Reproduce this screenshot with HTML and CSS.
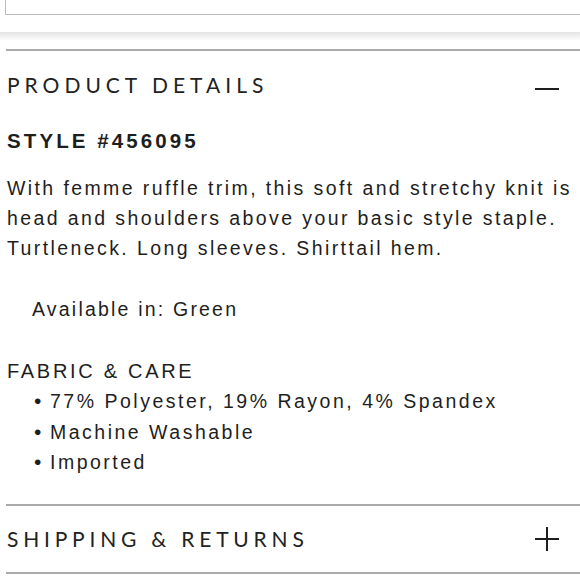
FILE: index.html
```html
<!DOCTYPE html>
<html>
<head>
<meta charset="utf-8">
<link rel="stylesheet" href="styles.css">
</head>
<body>
<div class="page">
  <div class="top-box"></div>
  <div class="shadow-band"></div>
  <div class="rule"></div>
  <div class="acc-head">
    <span class="acc-title">PRODUCT DETAILS</span>
    <svg class="icon minus" width="24" height="24" viewBox="0 0 24 24"><line x1="0" y1="16" x2="24" y2="16" stroke="#1e1e1e" stroke-width="2"/></svg>
  </div>
  <div class="details">
    <div class="style-no">STYLE #456095</div>
    <p class="desc">With femme ruffle trim, this soft and stretchy knit is head and shoulders above your basic style staple. Turtleneck. Long sleeves. Shirttail hem.</p>
    <p class="avail">Available in: Green</p>
    <div class="fabric">FABRIC &amp; CARE</div>
    <ul class="care">
      <li>77% Polyester, 19% Rayon, 4% Spandex</li>
      <li>Machine Washable</li>
      <li>Imported</li>
    </ul>
  </div>
  <div class="rule"></div>
  <div class="acc-head ship">
    <span class="acc-title">SHIPPING &amp; RETURNS</span>
    <svg class="icon plus" width="24" height="24" viewBox="0 0 24 24"><line x1="0" y1="12" x2="24" y2="12" stroke="#1e1e1e" stroke-width="2"/><line x1="12" y1="0" x2="12" y2="24" stroke="#1e1e1e" stroke-width="2"/></svg>
  </div>
  <div class="rule"></div>
</div>
</body>
</html>
```

FILE: styles.css
```css
html, body {
  margin: 0;
  padding: 0;
  background: #fff;
}
.page {
  width: 580px;
  overflow: hidden;
  color: #1e1e1e;
  font-family: "Liberation Sans", Arial, sans-serif;
}
.top-box {
  height: 14px;
  margin-left: 5px;
  margin-right: -10px;
  border: 1.5px solid #bdbdbd;
  border-top: none;
}
.shadow-band {
  height: 9px;
  margin-top: 17px;
  background: linear-gradient(#e4e4e4, #f7f7f7 70%, #fff);
}
.rule {
  height: 2px;
  margin-left: 6px;
  background: #aaa;
}
.shadow-band + .rule {
  margin-top: 8px;
}
.acc-head {
  display: flex;
  justify-content: space-between;
  align-items: center;
  height: 68px;
  padding: 0 21px 0 7px;
}
.acc-title {
  font-family: Lato, "Liberation Sans", sans-serif;
  font-size: 21px;
  letter-spacing: 5px;
  line-height: 30px;
  color: #222;
}
.ship .acc-title {
  letter-spacing: 4.8px;
}
.icon {
  display: block;
}
.ship {
  height: 66px;
}
.details {
  padding: 10px 0 26px 7px;
}
.style-no {
  font-weight: bold;
  font-size: 20.5px;
  letter-spacing: 3.1px;
  line-height: 24px;
}
.desc {
  margin: 20px -8px 0 0;
  font-size: 19.5px;
  line-height: 30px;
  letter-spacing: 2.4px;
}
.avail {
  margin: 31px 0 0 25px;
  font-size: 19.5px;
  line-height: 30px;
  letter-spacing: 2.2px;
}
.fabric {
  margin-top: 32px;
  font-size: 20px;
  line-height: 30px;
  letter-spacing: 2.7px;
}
.care {
  margin: 0;
  padding: 0 0 0 27px;
  list-style: none;
}
.care li {
  font-size: 19.5px;
  line-height: 30.5px;
  letter-spacing: 2.5px;
}
.care li::before {
  content: "\2022";
  display: inline-block;
  width: 16px;
  font-size: 21px;
  line-height: 1;
  letter-spacing: 0;
}
```
